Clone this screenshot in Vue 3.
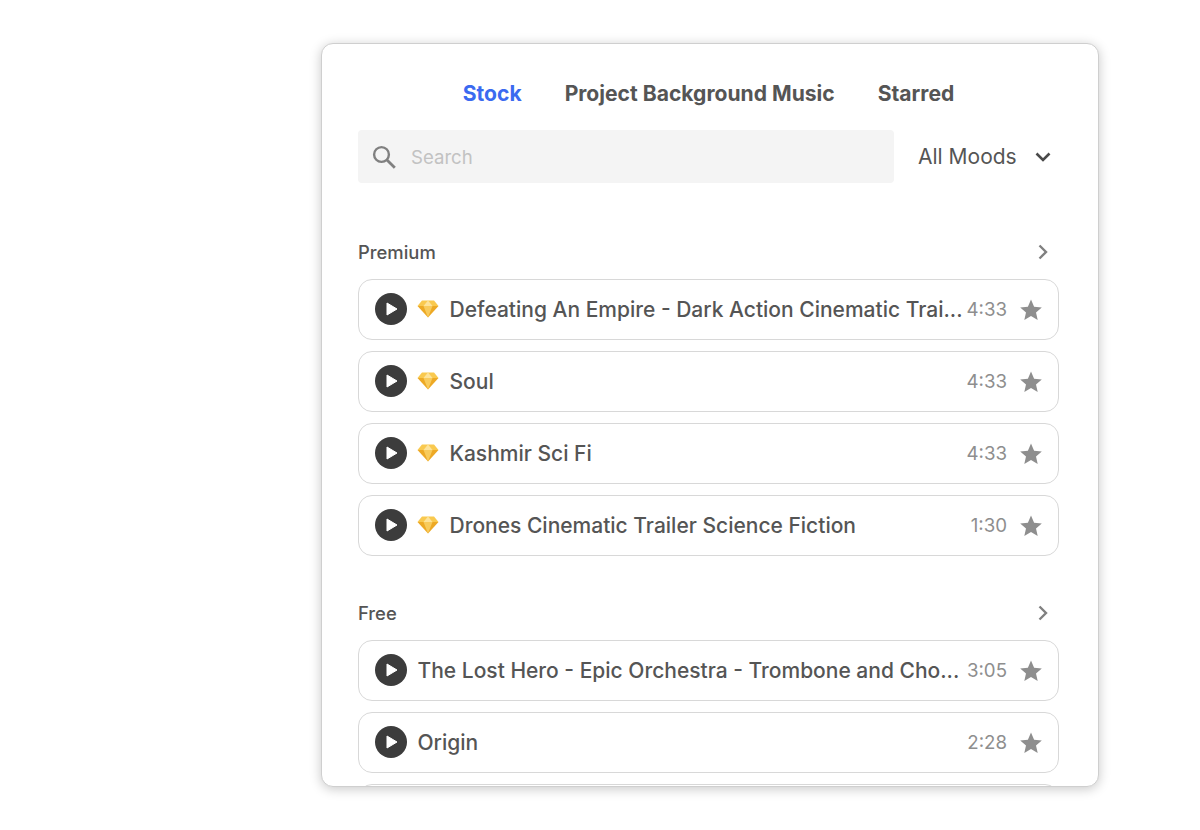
<template>
  <div class="page">
    <div class="panel">
      <div class="tabs">
        <span
          v-for="tab in tabs"
          :key="tab"
          class="tab"
          :class="{ active: tab === activeTab }"
        >{{ tab }}</span>
      </div>

      <div class="filters">
        <div class="search">
          <svg class="search-icon" viewBox="0 0 24 24" width="24" height="24">
            <circle cx="9.5" cy="9.5" r="7.4" fill="none" stroke="#808080" stroke-width="2.4" />
            <path d="M15 15 L22.8 22.8" fill="none" stroke="#808080" stroke-width="2.8" />
          </svg>
          <span class="placeholder">Search</span>
        </div>
        <div class="moods">
          <span>All Moods</span>
          <svg viewBox="0 0 16 10" width="16" height="10">
            <path d="M1.5 1.5 L8 8 L14.5 1.5" fill="none" stroke="#4a4a4a" stroke-width="2.6" />
          </svg>
        </div>
      </div>

      <section v-for="group in groups" :key="group.name" class="group">
        <div class="group-head">
          <span>{{ group.name }}</span>
          <svg viewBox="0 0 10 16" width="10" height="16">
            <path d="M1.5 1.5 L8 8 L1.5 14.5" fill="none" stroke="#808080" stroke-width="2.4" />
          </svg>
        </div>
        <div class="rows">
          <div v-for="track in group.tracks" :key="track.title" class="row">
            <span class="play">
              <svg viewBox="0 0 12 14" width="12" height="14">
                <path d="M1 1 L11 7 L1 13 Z" fill="#fff" stroke="#fff" stroke-linejoin="round" />
              </svg>
            </span>
            <svg v-if="group.premium" class="gem" viewBox="0 0 22 18" width="22" height="18">
              <path d="M5 0.5 H17 L21.5 6 H0.5 Z" fill="#f9c94f" />
              <path d="M0.5 6 H21.5 L11 17.5 Z" fill="#eda925" />
              <path d="M6.5 6 H15.5 L11 17.5 Z" fill="#f8cb5c" />
              <path d="M6.5 6 L11 0.5 L15.5 6 Z" fill="#fde39a" />
            </svg>
            <span class="title">{{ track.title }}</span>
            <span class="time">{{ track.time }}</span>
            <svg class="star" viewBox="0 0 24 24" width="24" height="24">
              <path d="M12 1.6 L15.1 8.7 L22.8 9.4 L17 14.5 L18.7 22.1 L12 18.1 L5.3 22.1 L7 14.5 L1.2 9.4 L8.9 8.7 Z" fill="#8e8e8e" />
            </svg>
          </div>
          <!-- next row is cut by the panel, only its top border shows -->
          <div v-if="group.more" class="row"></div>
        </div>
      </section>
    </div>
  </div>
</template>

<script setup>
const activeTab = 'Stock'
const tabs = ['Stock', 'Project Background Music', 'Starred']

const groups = [
  {
    name: 'Premium',
    premium: true,
    tracks: [
      { title: 'Defeating An Empire - Dark Action Cinematic Trai...', time: '4:33' },
      { title: 'Soul', time: '4:33' },
      { title: 'Kashmir Sci Fi', time: '4:33' },
      { title: 'Drones Cinematic Trailer Science Fiction', time: '1:30' },
    ],
  },
  {
    name: 'Free',
    premium: false,
    more: true,
    tracks: [
      { title: 'The Lost Hero - Epic Orchestra - Trombone and Cho...', time: '3:05' },
      { title: 'Origin', time: '2:28' },
    ],
  },
]
</script>

<style>
html,
body {
  background: #fff;
}
</style>

<style scoped>
.page {
  width: 1200px;
  height: 830px;
  padding: 43px 0 0 321px;
  box-sizing: border-box;
  font-family: Inter, "Liberation Sans", sans-serif;
  color: #555;
}

.panel {
  width: 778px;
  height: 744px;
  box-sizing: border-box;
  padding: 0 39px 0 36px;
  overflow: hidden;
  background: #fff;
  border: 1px solid #cfcfcf;
  border-radius: 12px;
  box-shadow: 0 2px 12px rgba(0, 0, 0, 0.22);
}

.tabs {
  display: flex;
  justify-content: center;
  gap: 43px;
  padding-top: 35px;
  height: 86px;
  box-sizing: border-box;
  line-height: 30px;
}

.tab {
  font-size: 21.1px;
  font-weight: 700;
  color: #555;
}

.tab.active {
  color: #3b6af0;
}

.filters {
  display: flex;
  align-items: center;
  gap: 24px;
}

.search {
  width: 536px;
  height: 53px;
  display: flex;
  align-items: center;
  gap: 15px;
  padding-left: 14px;
  box-sizing: border-box;
  background: #f4f4f4;
  border-radius: 4px;
}

.search-icon {
  flex: none;
}

.placeholder {
  font-size: 18.6px;
  color: #c2c2c2;
}

.moods {
  display: flex;
  align-items: center;
  gap: 18px;
  font-size: 21px;
}

.group {
  margin-top: 56px;
}

.group + .group {
  margin-top: 44px;
}

.group-head {
  display: flex;
  justify-content: space-between;
  align-items: center;
  height: 26px;
  padding-right: 11px;
  margin-bottom: 14px;
  font-size: 18.4px;
  font-weight: 500;
}

.rows {
  display: flex;
  flex-direction: column;
  gap: 11px;
}

.row {
  height: 61px;
  flex: none;
  box-sizing: border-box;
  display: flex;
  align-items: center;
  padding: 0 15px 1px 16px;
  border: 1px solid #d8d8d8;
  border-radius: 14px;
  background: #fff;
}

.play {
  flex: none;
  width: 32px;
  height: 32px;
  display: flex;
  align-items: center;
  justify-content: center;
  padding-left: 2px;
  box-sizing: border-box;
  border-radius: 50%;
  background: #3c3c3c;
}

.gem {
  flex: none;
  margin-left: 10px;
}

.title {
  flex: 1;
  min-width: 0;
  margin-left: 10.5px;
  font-size: 21px;
  font-weight: 500;
  white-space: nowrap;
}

.time {
  flex: none;
  margin-left: 3px;
  font-size: 18.7px;
  color: #8e8e8e;
}

.star {
  flex: none;
  margin-left: 12px;
  margin-top: 1px;
}
</style>
